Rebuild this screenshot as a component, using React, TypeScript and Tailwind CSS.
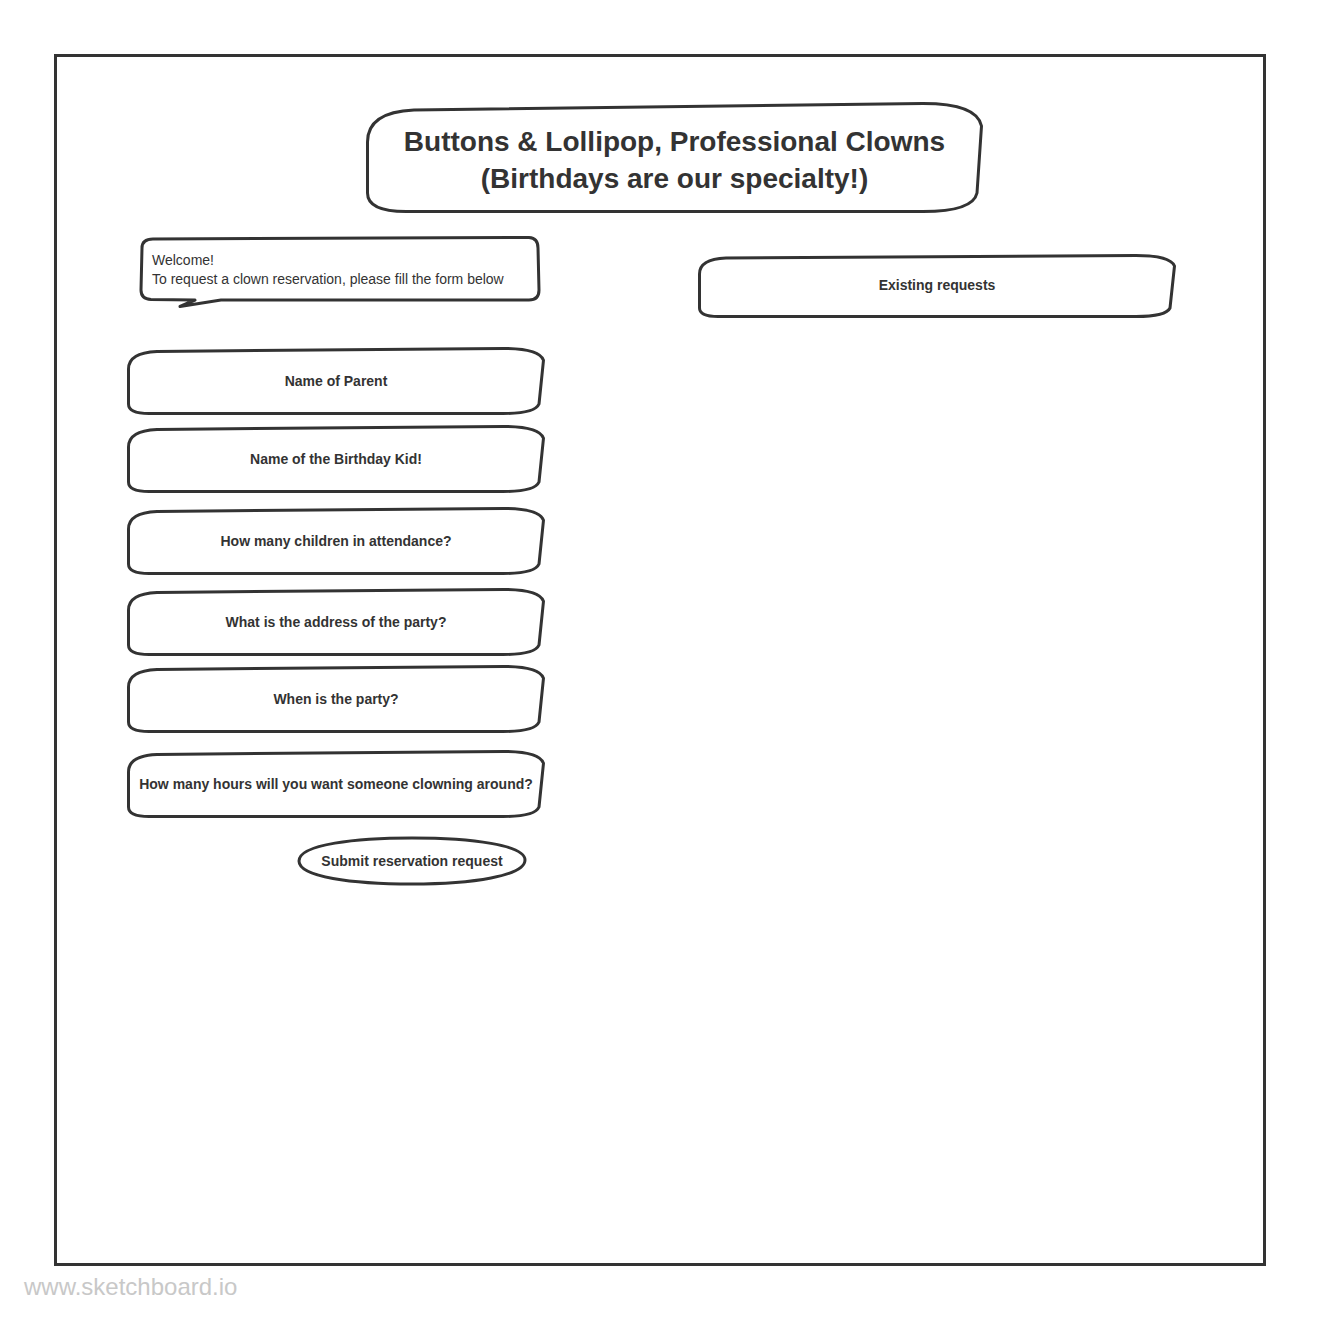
import React from "react";

// hand drawn outline, slightly skewed on the right like sketchboard shapes
const sketchPath = (w: number, h: number, r: number) => {
  const s = 1.5;
  return `M ${s} ${r} Q ${s} ${r * 0.25} ${r + 8} ${r * 0.2} L ${w - r - 20} ${s} Q ${w - 6} ${s} ${w - s} ${r * 0.6} L ${w - 6} ${h - r * 0.5} Q ${w - 10} ${h - s} ${w - r - 20} ${h - s} L ${r} ${h - s} Q ${s} ${h - s} ${s} ${h - r * 0.5} Z`;
};

type BoxProps = {
  w: number;
  h: number;
  r?: number;
  d?: string;
  className?: string;
  children?: React.ReactNode;
};

const SketchBox = ({ w, h, r = 22, d, className, children }: BoxProps) => (
  <div className={`relative shrink-0 ${className ?? ""}`} style={{ width: w, height: h }}>
    <svg
      className="absolute inset-0"
      width={w}
      height={h}
      viewBox={`0 0 ${w} ${h}`}
      fill="none"
    >
      <path
        d={d ?? sketchPath(w, h, r)}
        fill="#fff"
        stroke="#333"
        strokeWidth={3}
        strokeLinejoin="round"
      />
    </svg>
    <div className="relative h-full w-full">{children}</div>
  </div>
);

const FieldBox = ({ label, className }: { label: string; className?: string }) => (
  <SketchBox w={418} h={68} className={className}>
    <div className="flex h-full items-center justify-center text-[14px] font-bold text-[#333]">
      {label}
    </div>
  </SketchBox>
);

const bubblePath =
  "M 3 12 Q 3 3 14 3 L 390 1.5 Q 399 2 399 12 L 400 54 Q 400 64 390 64 L 82 64 L 41 70.5 L 56 64 L 12 63.5 Q 2 63 2 54 Z";

const ellipsePath =
  "M 2 25 C 2 8 60 2 115 2 C 175 2 228 9 228 24 C 228 40 175 48 115 48 C 55 48 2 41 2 25 Z";

const App = () => {
  return (
    <div className="min-h-screen w-full bg-white font-['Liberation_Sans',Arial,sans-serif] text-[#333]">
      <div className="ml-[54px] pt-[54px]">
        <div className="h-[1212px] w-[1212px] border-[3px] border-[#333]">
          {/* title */}
          <SketchBox w={617} h={111} r={40} className="ml-[309px] mt-[45px]">
            <div className="flex h-full flex-col items-center justify-center pt-1 text-[28px] font-bold leading-[37px]">
              <span>Buttons &amp; Lollipop, Professional Clowns</span>
              <span>(Birthdays are our specialty!)</span>
            </div>
          </SketchBox>

          <div className="ml-[70px] mt-[23px] flex gap-[153px]">
            {/* form column */}
            <div className="flex w-[418px] flex-col">
              <SketchBox w={402} h={72} d={bubblePath} className="ml-[12px]">
                <div className="pl-[13px] pt-[15px] text-[14px] leading-[19px]">
                  <p>Welcome!</p>
                  <p>To request a clown reservation, please fill the form below</p>
                </div>
              </SketchBox>

              <FieldBox label="Name of Parent" className="mt-[39px]" />
              <FieldBox label="Name of the Birthday Kid!" className="mt-[10px]" />
              <FieldBox label="How many children in attendance?" className="mt-[14px]" />
              <FieldBox label="What is the address of the party?" className="mt-[13px]" />
              <FieldBox label="When is the party?" className="mt-[9px]" />
              <FieldBox
                label="How many hours will you want someone clowning around?"
                className="mt-[17px]"
              />

              <SketchBox w={230} h={50} d={ellipsePath} className="ml-[170px] mt-[18px]">
                <div className="flex h-full items-center justify-center text-[14px] font-bold">
                  Submit reservation request
                </div>
              </SketchBox>
            </div>

            {/* requests column */}
            <div className="flex flex-col">
              <SketchBox w={478} h={64} r={20} className="mt-[18px]">
                <div className="flex h-full items-center justify-center pb-[2px] text-[14px] font-bold">
                  Existing requests
                </div>
              </SketchBox>
            </div>
          </div>
        </div>
      </div>
      <div className="ml-[24px] mt-[7px] text-[24px] leading-7 text-[#c8c8c8]">
        www.sketchboard.io
      </div>
    </div>
  );
};

export default App;
